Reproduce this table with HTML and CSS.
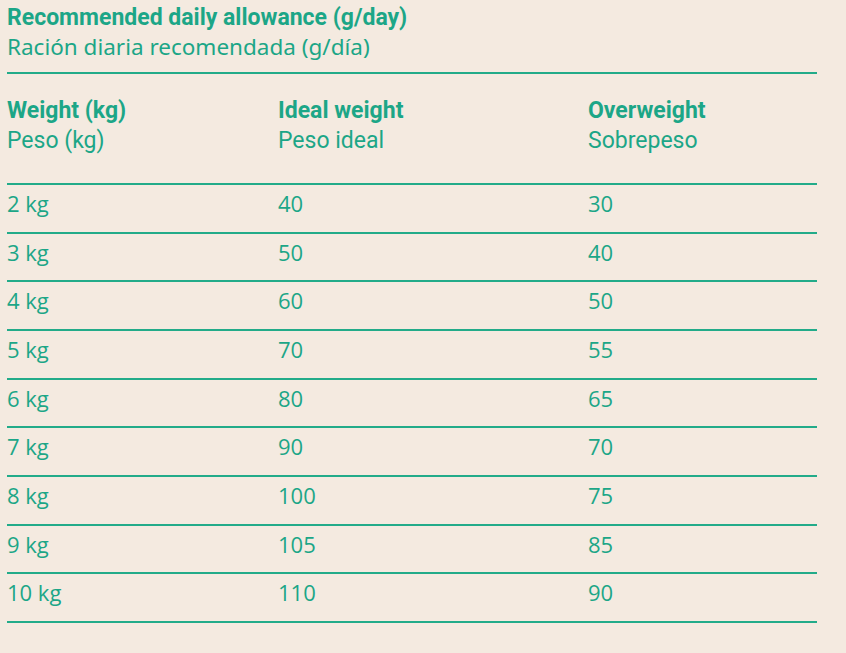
FILE: index.html
```html
<!DOCTYPE html>
<html>
<head>
<meta charset="utf-8">
<link rel="stylesheet" href="styles.css">
</head>
<body>
<div class="page">
  <div class="title">
    <div class="title-en">Recommended daily allowance (g/day)</div>
    <div class="title-es">Ración diaria recomendada (g/día)</div>
  </div>
  <div class="table">
    <div class="row head">
      <div class="cell"><div class="h-en">Weight (kg)</div><div class="h-es">Peso (kg)</div></div>
      <div class="cell"><div class="h-en">Ideal weight</div><div class="h-es">Peso ideal</div></div>
      <div class="cell"><div class="h-en">Overweight</div><div class="h-es">Sobrepeso</div></div>
    </div>
    <div class="row data"><div class="cell">2 kg</div><div class="cell">40</div><div class="cell">30</div></div>
    <div class="row data"><div class="cell">3 kg</div><div class="cell">50</div><div class="cell">40</div></div>
    <div class="row data"><div class="cell">4 kg</div><div class="cell">60</div><div class="cell">50</div></div>
    <div class="row data"><div class="cell">5 kg</div><div class="cell">70</div><div class="cell">55</div></div>
    <div class="row data"><div class="cell">6 kg</div><div class="cell">80</div><div class="cell">65</div></div>
    <div class="row data"><div class="cell">7 kg</div><div class="cell">90</div><div class="cell">70</div></div>
    <div class="row data"><div class="cell">8 kg</div><div class="cell">100</div><div class="cell">75</div></div>
    <div class="row data"><div class="cell">9 kg</div><div class="cell">105</div><div class="cell">85</div></div>
    <div class="row data"><div class="cell">10 kg</div><div class="cell">110</div><div class="cell">90</div></div>
  </div>
</div>
</body>
</html>
```

FILE: styles.css
```css
html, body {
  margin: 0;
  padding: 0;
  background: #f4eae0;
}
body {
  width: 846px;
  height: 653px;
  overflow: hidden;
  color: #1ca687;
}
.page {
  padding: 4px 0 0 7px;
  width: 810px;
}
.title {
  border-bottom: 2px solid #22ab89;
  padding-bottom: 10px;
}
.title-en {
  font-family: "Roboto", sans-serif;
  font-weight: bold;
  font-size: 23px;
  line-height: 28px;
}
.title-es {
  font-family: "Noto Sans", sans-serif;
  font-size: 22.5px;
  line-height: 30px;
}
.row {
  display: grid;
  grid-template-columns: 271px 310px 1fr;
  border-bottom: 2px solid #22ab89;
  box-sizing: border-box;
}
.head {
  height: 111px;
  padding-top: 22px;
}
.h-en {
  font-family: "Roboto", sans-serif;
  font-weight: bold;
  font-size: 23px;
  line-height: 30px;
}
.h-es {
  font-family: "Roboto", sans-serif;
  font-size: 23px;
  line-height: 30px;
}
.data {
  height: 48.67px;
  font-family: "Open Sans", sans-serif;
  font-size: 22px;
  line-height: 37px;
}
```
